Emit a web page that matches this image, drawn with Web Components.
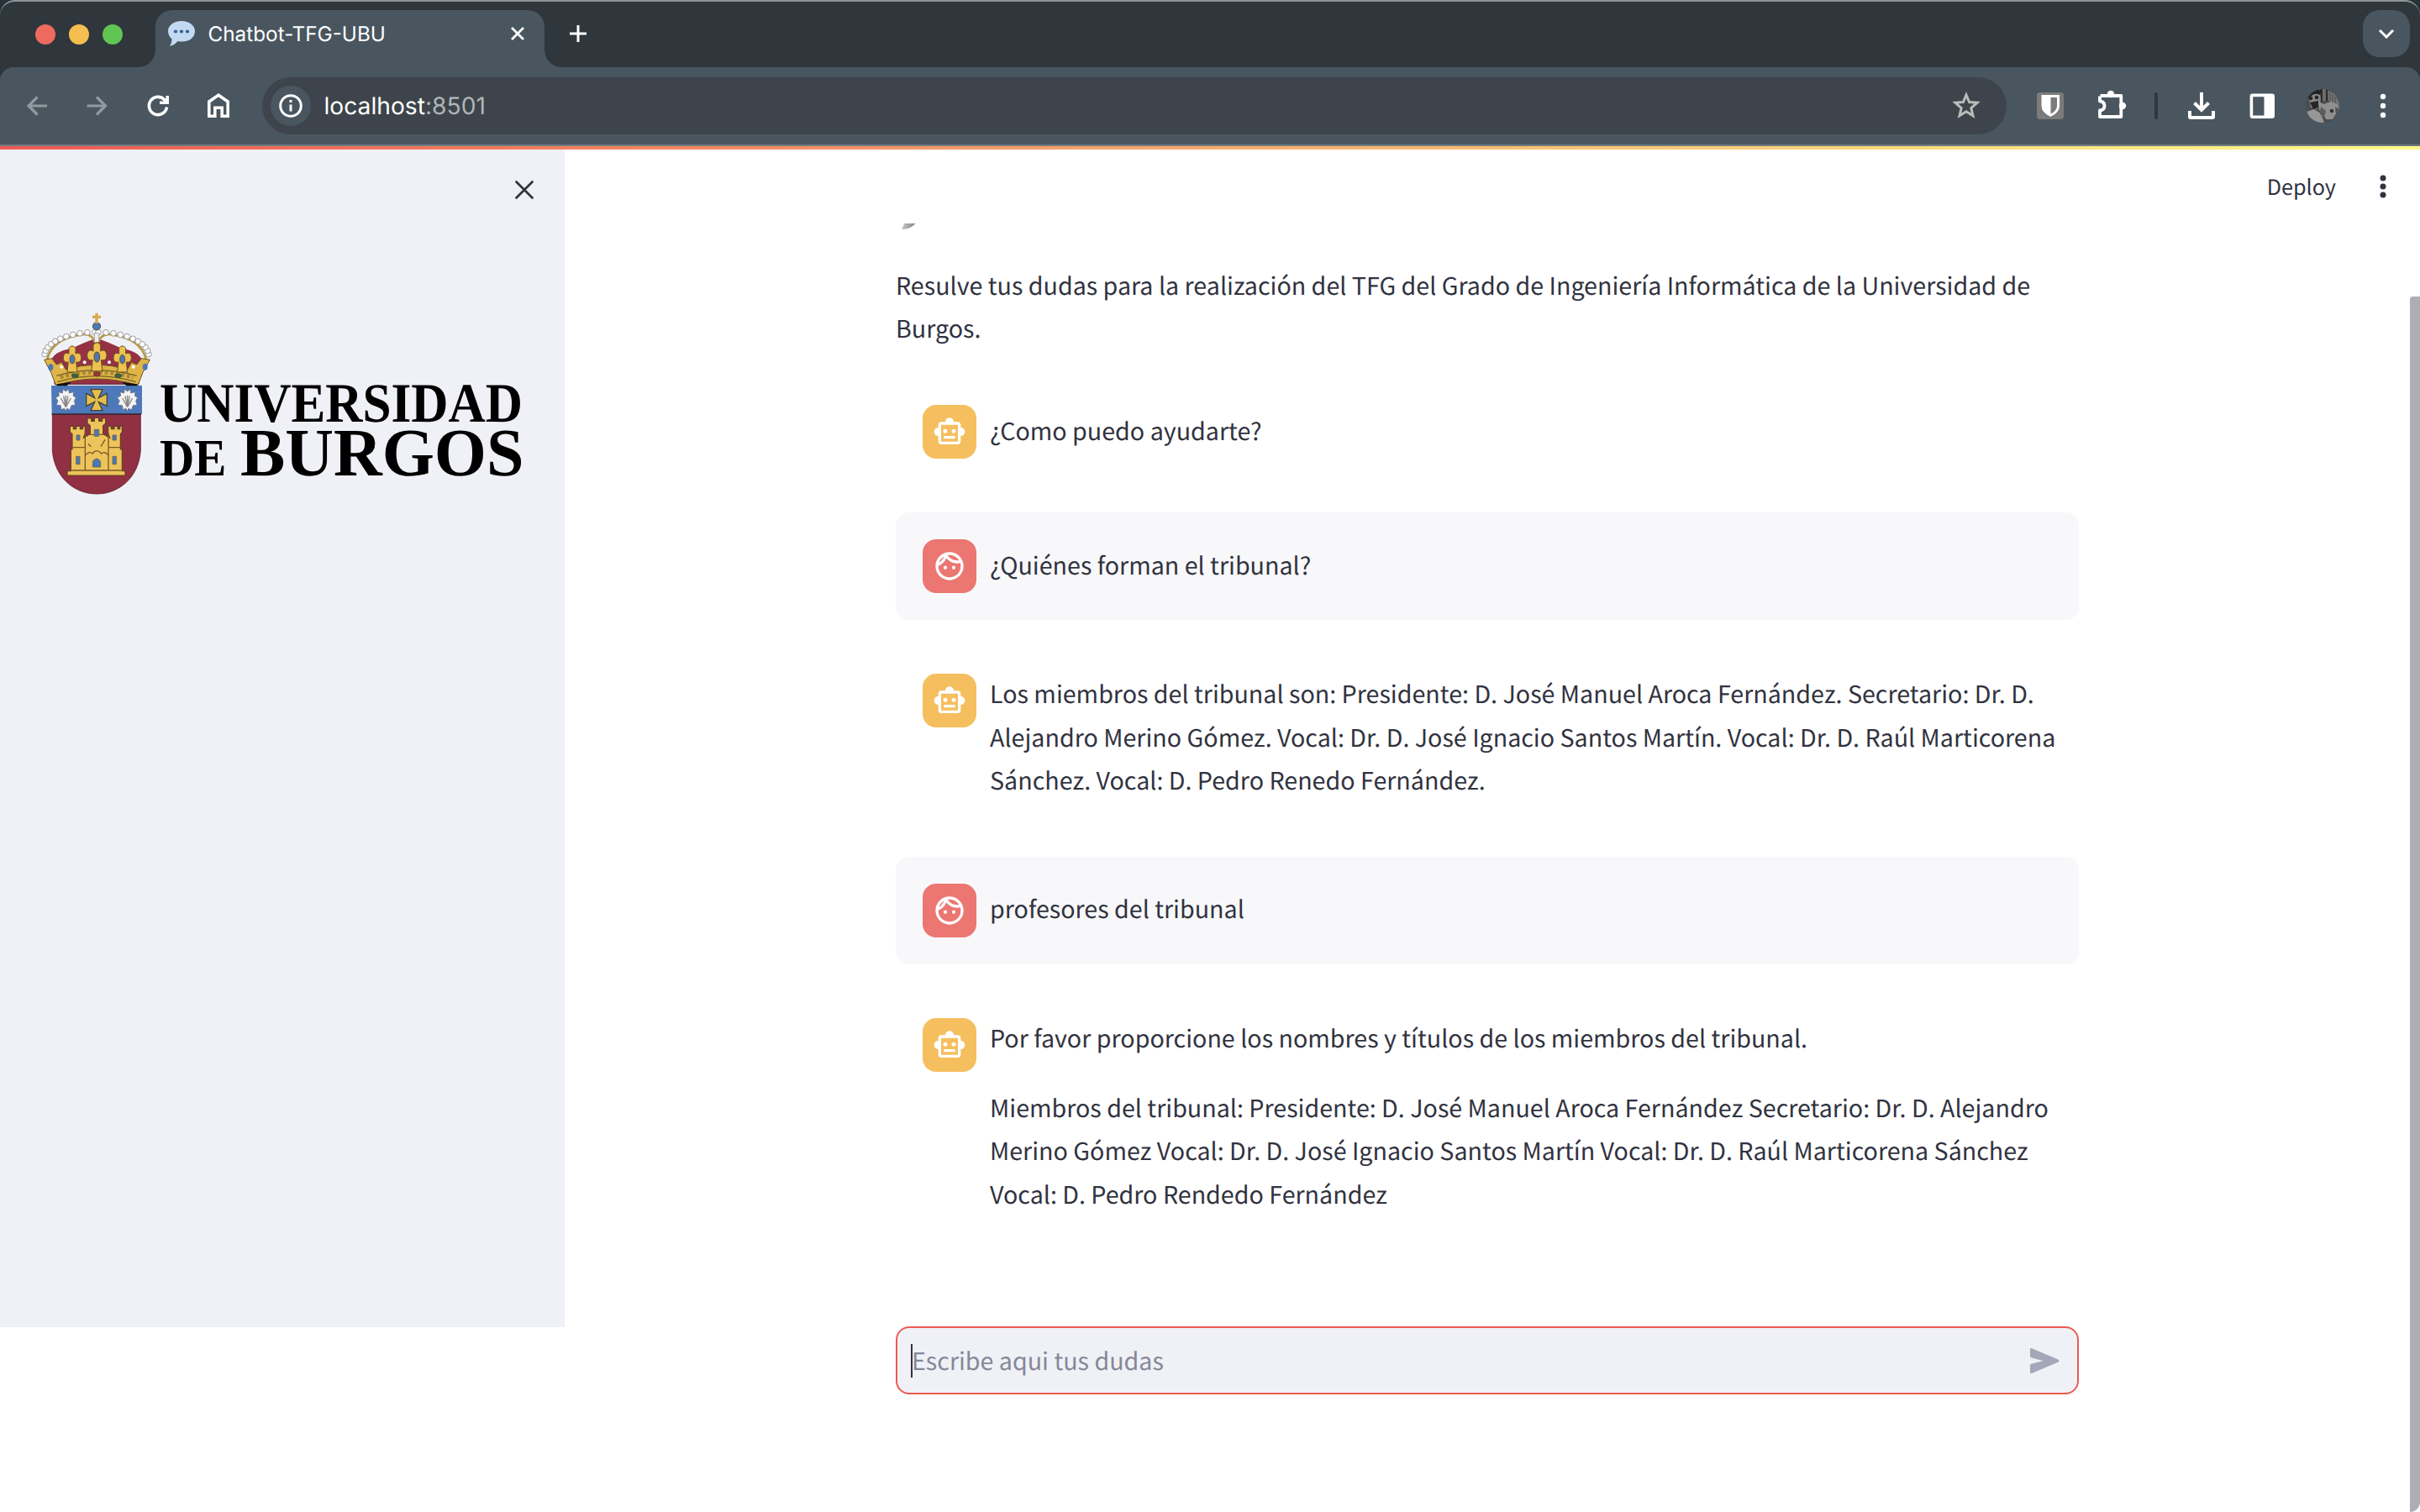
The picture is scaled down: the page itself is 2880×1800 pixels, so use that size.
<!DOCTYPE html>
<html lang="es"><head><meta charset="utf-8"><title>Chatbot-TFG-UBU</title>
<style>html,body{margin:0;height:100%;background:#fff;overflow:hidden}</style></head>
<body>
<browser-window>
  <tab-strip slot="chrome" label="Chatbot-TFG-UBU"></tab-strip>
  <nav-bar slot="chrome"></nav-bar>
  <side-bar slot="side"></side-bar>
  <app-header slot="header">Deploy</app-header>
  <chat-intro slot="content"><text-line>Resulve tus dudas para la realización del TFG del Grado de Ingeniería Informática de la Universidad de</text-line><text-line>Burgos.</text-line></chat-intro>
  <chat-message slot="content" role="bot"><chat-paragraph><text-line>¿Como puedo ayudarte?</text-line></chat-paragraph></chat-message>
  <chat-message slot="content" role="user"><chat-paragraph><text-line>¿Quiénes forman el tribunal?</text-line></chat-paragraph></chat-message>
  <chat-message slot="content" role="bot"><chat-paragraph><text-line>Los miembros del tribunal son: Presidente: D. José Manuel Aroca Fernández. Secretario: Dr. D.</text-line><text-line>Alejandro Merino Gómez. Vocal: Dr. D. José Ignacio Santos Martín. Vocal: Dr. D. Raúl Marticorena</text-line><text-line>Sánchez. Vocal: D. Pedro Renedo Fernández.</text-line></chat-paragraph></chat-message>
  <chat-message slot="content" role="user"><chat-paragraph><text-line>profesores del tribunal</text-line></chat-paragraph></chat-message>
  <chat-message slot="content" role="bot"><chat-paragraph><text-line>Por favor proporcione los nombres y títulos de los miembros del tribunal.</text-line></chat-paragraph><chat-paragraph><text-line>Miembros del tribunal: Presidente: D. José Manuel Aroca Fernández Secretario: Dr. D. Alejandro</text-line><text-line>Merino Gómez Vocal: Dr. D. José Ignacio Santos Martín Vocal: Dr. D. Raúl Marticorena Sánchez</text-line><text-line>Vocal: D. Pedro Rendedo Fernández</text-line></chat-paragraph></chat-message>
  <chat-input slot="footer">Escribe aqui tus dudas</chat-input>
</browser-window>
<script>
const define = (name, html) => customElements.define(name, class extends HTMLElement {
  connectedCallback() {
    if (this.shadowRoot) return;
    this.attachShadow({mode: 'open'}).innerHTML = typeof html === 'function' ? html(this) : html;
  }
});

define('text-line', `<style>:host{display:block;height:51.2px;line-height:var(--line,51.2px);white-space:nowrap}</style><slot></slot>`);
define('chat-paragraph', `<style>:host{display:block;--line:48.4px}</style><slot></slot>`);

define('chat-intro', `<style>
:host{display:block;margin-bottom:34px}
.clip{height:7px;overflow:hidden;margin-bottom:41px}
svg{display:block;margin-left:7px}
</style><div class="clip"><svg width="17" height="7" viewBox="0 0 17 7"><defs><linearGradient id="g"><stop offset="0" stop-color="#c4c4c4"/><stop offset="1" stop-color="#858585"/></linearGradient></defs><path d="M3.500 0H16.500C13 4 8 7 1 7C-.5 7 2 3 3.500 0Z" fill="url(#g)"/></svg></div><slot></slot>`);

const icons = {
  bot: 'M20 9V7c0-1.1-.9-2-2-2h-3c0-1.66-1.34-3-3-3S9 3.34 9 5H6c-1.100 0-2 .9-2 2v2c-1.660 0-3 1.340-3 3s1.340 3 3 3v4c0 1.100.9 2 2 2h12c1.100 0 2-.9 2-2v-4c1.660 0 3-1.340 3-3s-1.340-3-3-3zm-2 10H6V7h12v12zm-9-6c-.83 0-1.500-.67-1.500-1.500S8.170 10 9 10s1.500.67 1.500 1.500S9.830 13 9 13zm7.500-1.500c0 .83-.67 1.500-1.500 1.500s-1.500-.67-1.500-1.500.67-1.500 1.500-1.500 1.500.67 1.500 1.500zM8 15h8v2H8v-2z',
  user: 'M10.250 13c0 .69-.56 1.250-1.250 1.250S7.750 13.690 7.750 13s.56-1.250 1.250-1.250 1.250.56 1.250 1.250zM15 11.750c-.69 0-1.250.56-1.250 1.250s.56 1.250 1.250 1.250 1.250-.56 1.250-1.250-.56-1.250-1.250-1.250zm7 .25c0 5.520-4.480 10-10 10S2 17.520 2 12 6.480 2 12 2s10 4.480 10 10zM10.660 4.120C12.060 6.440 14.600 8 17.500 8c.46 0 .91-.05 1.340-.12C17.440 5.560 14.900 4 12 4c-.46 0-.91.05-1.340.12zM4.420 9.470c1.710-.97 3.030-2.550 3.660-4.440C6.370 6 5.050 7.580 4.420 9.470zM20 12c0-.78-.12-1.530-.33-2.240-.7.15-1.420.24-2.170.24-3.130 0-5.920-1.440-7.760-3.690C8.690 8.870 6.600 10.880 4 11.860c.01.04 0 .09 0 .14 0 4.420 3.580 8 8 8s8-3.580 8-8z'
};
define('chat-message', el => { const r = el.getAttribute('role'); return `<style>
:host{display:flex;gap:16px;padding:32px;border-radius:16px;margin-bottom:32px;box-sizing:border-box;${r === 'user' ? 'background:#f8f8fa' : ''}}
.av{flex:none;width:64px;height:64px;border-radius:16px;display:grid;place-items:center;background:${r === 'user' ? '#ec7671' : '#f5bf5f'}}
.body{display:flex;flex-direction:column;gap:32px;${el.querySelectorAll('text-line').length === 1 ? 'justify-content:center' : ''}}
</style><div class="av"><svg width="40" height="40" viewBox="0 0 24 24" fill="#fff" fill-rule="evenodd"><path d="${icons[r]}"/></svg></div><div class="body"><slot></slot></div>`; });

define('chat-input', `<style>
:host{display:flex;align-items:center;box-sizing:border-box;height:81px;border:2px solid #ec5a53;border-radius:16px;background:#f0f1f6;padding:0 16px;color:#858899}
i{width:2px;height:40px;background:#31333f;margin-right:-1px}
.t{flex:1}
svg{margin-right:3px}
</style><i></i><span class="t"><slot></slot></span><svg width="40" height="40" viewBox="0 0 40 40" fill="#a3a8b8"><path d="M3 6.300Q3 4.400 4.800 5.100L36.500 18.500Q38.500 20 36.500 21.500L4.800 34.900Q3 35.600 3 33.700V25.500Q3 24 4.800 23.500L18.500 20L4.800 16.500Q3 16 3 14.500Z"/></svg>`);

define('app-header', `<style>
:host{display:flex;justify-content:flex-end;align-items:center;gap:46px;height:88px;padding-right:34px;font-size:25.2px}
</style><slot></slot><svg width="20" height="32" viewBox="0 0 20 32" fill="#31333f"><circle cx="10" cy="6" r="3.500"/><circle cx="10" cy="16" r="3.500"/><circle cx="10" cy="26" r="3.500"/></svg>`);

const beads = () => {
  let s = '';
  for (const m of [1, -1]) for (let i = 0; i < 11; i++) {
    const a = Math.PI * (0.02 + i * 0.047), x = 255 - m * 186 * Math.cos(a), y = 190 - 84 * Math.sin(a);
    s += `<circle cx="${x}" cy="${y}" r="10" fill="#fff" stroke="#999" stroke-width="3"/>`;
  }
  return s;
};
const fleuron = (x, y, s) => `<g transform="translate(${x} ${y}) scale(${s})" fill="#ecc152" stroke="#6b5220" stroke-width="3"><path d="M-12-40Q0-55 12-40L12-20Q30-28 32-6Q32 14 14 10L18 46H-18L-14 10Q-32 14-32-6Q-30-28-12-20Z"/><ellipse rx="9" ry="16" fill="#4a78b8"/></g>`;
const shell = x => `<g transform="translate(${x} 348)"><path d="M-10-38L0-30L10-38L12-24L28-28L26-14L36-8L30 4L34 18L20 20L14 36L4 30L0 40L-6 30L-16 36L-18 20L-34 18L-28 4L-36-8L-24-14L-26-28L-12-24Z" fill="#f4f4f4" stroke="#667" stroke-width="2"/><path d="M0 26L-18-6M0 26L-8-14M0 26V-16M0 26L8-14M0 26L18-6" stroke="#888" stroke-width="4"/></g>`;
define('side-bar', `<style>
:host{display:block;width:672px;height:1402px;background:#f0f1f6;box-sizing:border-box}
.top{display:flex;justify-content:flex-end;padding:36px 36px 0 0;height:146px}
.logo{display:block;margin-left:30px;overflow:visible}
text{font-family:"Liberation Serif",serif;font-weight:700}
</style><div class="top"><svg width="24" height="24" viewBox="0 0 24 24" stroke="#31333f" stroke-width="2.800" stroke-linecap="round"><path d="M2.500 2.500l19 19M21.500 2.500l-19 19"/></svg></div>
<svg class="logo" width="600" height="240" viewBox="0 0 1800 720" fill="none">
<path d="M105 292V275Q255 240 405 275V292Z" fill="#963044" stroke="#5b2430" stroke-width="3"/>
<path d="M90 215Q98 175 165 165Q215 140 255 128Q295 140 345 165Q412 175 420 215L405 260H105Z" fill="#963044"/>
<path d="M78 205Q95 130 200 115Q245 105 255 165Q265 105 310 115Q415 130 432 205" stroke="#b89a45" stroke-width="8"/>
${beads()}
<path d="M247 110H263V165H247Z" fill="#eee" stroke="#888" stroke-width="2"/>
<circle cx="255" cy="85" r="14" fill="#4a78b8" stroke="#5a5a3a" stroke-width="3"/>
<path d="M250 75V57H240V47H250V38H260V47H270V57H260V75Z" fill="#d8ab4c"/>
<path d="M68 205L95 200L112 222L130 214L145 240Q255 205 365 240L380 214L398 222L415 200L445 205L420 250L402 296Q255 250 110 296L92 250Z" fill="#dfb548" stroke="#6b5220" stroke-width="3"/>
<path d="M112 262Q255 222 398 262M115 284Q255 242 395 284" stroke="#766026" stroke-width="4"/>
<path d="M125 268Q255 232 385 268" stroke="#a88934" stroke-width="12" stroke-dasharray="12 8"/>
<g stroke="#443b1d" stroke-width="2"><ellipse cx="178" cy="262" rx="12" ry="7" fill="#2d6a4a"/><ellipse cx="332" cy="262" rx="12" ry="7" fill="#2d6a4a"/><ellipse cx="256" cy="256" rx="12" ry="8" fill="#a3303c"/></g>
${fleuron(168, 203, 1)}${fleuron(256, 195, 1.1)}${fleuron(347, 203, 1)}
<ellipse cx="91" cy="232" rx="9" ry="12" fill="#4a78b8"/><ellipse cx="428" cy="230" rx="9" ry="12" fill="#4a78b8"/>
<g fill="#fff"><circle cx="212" cy="214" r="6"/><circle cx="300" cy="214" r="6"/><circle cx="130" cy="230" r="6"/><circle cx="386" cy="230" r="6"/></g>
<path d="M97 398H412V530C405 625 335 684 255 684S105 625 97 530Z" fill="#912f43" stroke="#5f2631" stroke-width="2.500"/>
<path d="M93 297H417V399H95Z" fill="#4d79ba"/><path d="M95 399H414" stroke="#31242d" stroke-width="4"/><path d="M112 292L165 285L148 298H115ZM400 292L345 285L362 298H400Z" fill="#111"/>
${shell(145)}${shell(365)}
<path d="M234 311H276L262 341L292 325V370L262 355L276 386H234L248 355L218 370V325L248 341Z" fill="#e6bd51" stroke="#454530" stroke-width="4"/>
<path d="M150 618V602H163V525H168V470L160 463V442H172V452H182V442H196V452H206V442H214V466L208 484L232 470V440L222 432V414H236V424H247V412H263V424H275V414H287V432L278 440V470L302 484L296 466V442H307V452H318V442H330V452H338V442H346V463L340 470V525H346V602H357V618Z" fill="#edc45b" stroke="#5d421e" stroke-width="3.500"/>
<path d="M166 518H212M298 518H343M160 600H350M214 466V600M297 466V600M232 472H278M216 545Q230 530 240 540Q255 520 272 540Q282 530 296 545M225 505L235 515M285 490L270 515" stroke="#7a5a26" stroke-width="4"/>
<g fill="#4977b8" stroke="#766b4a" stroke-width="3"><path d="M247 454H263V478H247ZM183 474H195V492H183ZM312 474H325V492H312ZM182 550H195V578H182ZM312 550H325V578H312ZM241 588V568Q255 548 269 568V588Z"/></g>
<g fill="#000"><text x="480" y="427" font-size="199" textLength="1296" lengthAdjust="spacingAndGlyphs">UNIVERSIDAD</text><text x="480" y="618" font-size="188" textLength="238" lengthAdjust="spacingAndGlyphs">DE</text><text x="768" y="618" font-size="243" textLength="1012" lengthAdjust="spacingAndGlyphs">BURGOS</text></g>
</svg>`);

define('tab-strip', el => `<style>
:host{display:flex;height:80px;background:#2f363c;border-top:2px solid #8e9598;box-sizing:border-box;align-items:flex-start;font:400 24.300px Inter,sans-serif;color:#fff;border-radius:18px 18px 0 0}
.lights{display:flex;gap:16px;padding:27px 0 0 42px;width:142.500px;height:20px}
.lights b{width:24px;height:24px;border-radius:50%;flex:none}
.tab{position:relative;width:463.500px;height:68px;margin-top:10px;background:#49565f;border-radius:20px 20px 0 0;display:flex;align-items:flex-start;box-sizing:border-box;padding:12px 24px 0 15.500px}
.tab:before,.tab:after{content:"";position:absolute;bottom:0;width:20px;height:20px}
.tab:before{left:-20px;background:radial-gradient(circle at 0 0,transparent 19.500px,#49565f 20px)}
.tab:after{right:-20px;background:radial-gradient(circle at 100% 0,transparent 19.500px,#49565f 20px)}
.tab span{flex:1;margin-left:15.500px;line-height:32px;white-space:nowrap}
.tab .x{margin-top:8px}
.plus{margin:28px 0 0 30px}
.search{margin:10px 12px 0 auto;width:56px;height:56px;border-radius:20px;background:#49565f;display:grid;place-items:center}
</style>
<div class="lights"><b style="background:#ed6a5e"></b><b style="background:#f5bf4f"></b><b style="background:#61c554"></b></div>
<div class="tab"><svg width="32" height="32" viewBox="0 0 32 32"><path d="M16 1C25 1 32 6 32 13S26 25.500 17 25.500Q14 25.500 11.500 25Q8 29.500 2 31Q4.500 27.500 4.600 22.500C2 20.500 0 17 0 13C0 6 7 1 16 1Z" fill="#c2daf1"/><g fill="#365f94"><circle cx="9" cy="13.500" r="2.100"/><circle cx="16" cy="13.500" r="2.100"/><circle cx="23" cy="13.500" r="2.100"/></g></svg><span>${el.getAttribute('label')}</span><svg class="x" width="16" height="16" viewBox="0 0 16 16" stroke="#fff" stroke-width="2.800"><path d="M1 1l14 14M15 1L1 15"/></svg></div>
<svg class="plus" width="20" height="20" viewBox="0 0 20 20" stroke="#fff" stroke-width="3"><path d="M10 0v20M0 10h20"/></svg>
<div class="search"><svg width="20" height="12" viewBox="0 0 20 12" fill="none" stroke="#fff" stroke-width="3"><path d="M2 2l8 8 8-8"/></svg></div>`);

define('nav-bar', `<style>
:host{display:block;background:#2f363c}
.bar{display:flex;align-items:center;height:94px;box-sizing:border-box;border-bottom:2px solid #717b82;background:#49565f;border-radius:16px 16px 0 0;padding:0 24px 0 24px}
.nav{display:flex;gap:32px;width:288px}
.pill{width:2076px;height:68px;border-radius:34px;background:#3d444b;display:flex;align-items:center;box-sizing:border-box;padding:0 28px 0 10px;font:400 28.200px Inter,sans-serif;color:#fff}
.info{width:48px;height:48px;border-radius:50%;background:#49565f;display:grid;place-items:center;margin-right:15.500px}
.url{flex:1}.url em{font-style:normal;color:#b0b4b7}
.r{display:flex;flex:1;align-items:center;justify-content:space-between;padding-left:32px}
svg{display:block;overflow:visible}
</style><div class="bar"><div class="nav">
<svg width="40" height="40" viewBox="-20 -20 40 40" fill="none" stroke="#929a9f" stroke-width="3.200"><path d="M12 0H-10M0.500-10.500L-10 0L0.500 10.500"/></svg>
<svg width="40" height="40" viewBox="-20 -20 40 40" fill="none" stroke="#929a9f" stroke-width="3.200"><path d="M-12.500 0H9.500M-1-10.500L9.500 0L-1 10.500"/></svg>
<svg width="40" height="40" viewBox="-20 -20 40 40" fill="none" stroke="#fff" stroke-width="3.600"><path d="M10.500 1.500A10.600 10.600 0 1 1 8-7L11-4M11.200-12V-3.800H2"/></svg>
<svg width="40" height="40" viewBox="-20 -20 40 40" fill="none" stroke="#fff" stroke-width="3.600"><path d="M-11.200 12.200V-5L0-12.800L11.200-5V12.200H4.200V2.200H-4.200V12.200Z"/></svg></div>
<div class="pill"><div class="info"><svg width="28" height="28" viewBox="0 0 28 28" fill="none" stroke="#fff" stroke-width="3"><circle cx="14" cy="14" r="12.300"/><path d="M14 12.500V20.500M14 7V10"/></svg></div><span class="url">localhost<em>:8501</em></span>
<svg width="40" height="40" viewBox="-20 -20 40 40" fill="none" stroke="#bbb" stroke-width="3"><path d="M0-13L3.600-4.400L13-3.700L5.800 2.500L8 11.800L0 6.800L-8 11.800L-5.800 2.500L-13-3.700L-3.600-4.400Z"/></svg></div>
<div class="r">
<svg width="40" height="40" viewBox="-20 -20 40 40"><rect x="-16" y="-16" width="32" height="32" rx="4" fill="#7b7b7b"/><path d="M-10.500-13H11V0Q11 8 .3 13Q-10.500 8-10.500 0Z" fill="#fff"/><path d="M.5-10H8V0Q8 6 .5 9.500Z" fill="#7b7b7b"/></svg>
<svg width="40" height="40" viewBox="-21.500 -20 40 40"><path d="M-14-12H10.800V13H-14.500V5.500Q-9 5-9 0T-14.500-5.500V-11.500" fill="none" stroke="#fff" stroke-width="3.800" stroke-linejoin="round"/><circle cx="-1.500" cy="-14" r="4.200" fill="#fff"/><circle cx="12.500" cy="0" r="4.200" fill="#fff"/></svg>
<svg width="4" height="32"><rect width="4" height="32" rx="2" fill="#2f363c"/></svg>
<svg width="40" height="40" viewBox="-20 -20 40 40" fill="none" stroke="#fff" stroke-width="4"><path d="M0-16V5M-8.500-3.500L0 5L8.500-3.500M-14 6V13Q-14 14-13 14H13Q14 14 14 13V6"/></svg>
<svg width="40" height="40" viewBox="-20 -20 40 40"><rect x="-12.600" y="-12.600" width="25.800" height="25.800" rx="1.500" fill="none" stroke="#fff" stroke-width="3.600"/><path d="M2.500-13H13V13H2.500Z" fill="#fff"/></svg>
<svg width="40" height="40" viewBox="0 0 40 40"><defs><clipPath id="c"><circle cx="20" cy="20" r="20"/></clipPath></defs><g clip-path="url(#c)"><rect width="40" height="40" fill="#4c4c4c"/><path d="M17 0H20V15H17ZM24 0H26V14H24Z" fill="#2c2c2c"/><path d="M20 0H24V14H20Z" fill="#6d6d6d"/><path d="M26 2L34 5L40 16V26L34 18L27 14Z" fill="#747474"/><path d="M29 4V14M32 6V16M35 9V18" stroke="#4a4a4a"/><path d="M3 8L10 1L17 3L18 13L14 24L6 22Z" fill="#858585"/><path d="M2 9Q9-2 18 2L17 7Q10 3 4 11Z" fill="#202020"/><g fill="#252525"><circle cx="6" cy="11" r="2.300"/><circle cx="13" cy="10" r="2.300"/><path d="M5 16L15 14L15 22L9 24Z"/></g><path d="M1 27L10 24L18 29L22 40H4Z" fill="#969696"/><path d="M15 14L21 18L30 15L38 18L39 25L32 36L24 36L20 28L16 25Z" fill="#8f8f8f"/><path d="M18 21L24 26L22 34L17 30Z" fill="#5b5b5b"/><circle cx="31" cy="26" r="2.300" fill="#333"/><path d="M35 21L39 24L36 30Z" fill="#515151"/></g></svg>
<svg width="40" height="40" viewBox="-20 -20 40 40" fill="#fff"><circle cy="-11" r="3.200"/><circle r="3.200"/><circle cy="11" r="3.200"/></svg>
</div></div>`);

define('browser-window', `<style>
:host{display:flex;flex-direction:column;position:relative;width:2880px;height:1800px;overflow:hidden;background:#fff;color:#31333f;font:28.650px/1.600 "Noto Sans CJK SC",sans-serif;text-rendering:geometricPrecision}
.line{height:4px;background:linear-gradient(90deg,#ee5a52,#fffb88);flex:none}
.page{display:flex;flex:1;min-height:0}
.main{flex:1;min-width:0;display:flex;flex-direction:column}
.col{width:1408px;margin-left:394px;height:1313px;flex:none}
.foot{width:1408px;margin-left:394px}
.bar{width:12px;margin-top:175px;background:#adadb3;flex:none;border-radius:6px 0 20px 0}
.main ::slotted(app-header){margin-right:-12px}
.top{background:#263238}
</style><div class="top"><slot name="chrome"></slot></div><div class="line"></div>
<div class="page"><slot name="side"></slot><div class="main"><slot name="header"></slot><div class="col"><slot name="content"></slot></div><div class="foot"><slot name="footer"></slot></div></div><div class="bar"></div></div>`);
</script>
</body></html>
